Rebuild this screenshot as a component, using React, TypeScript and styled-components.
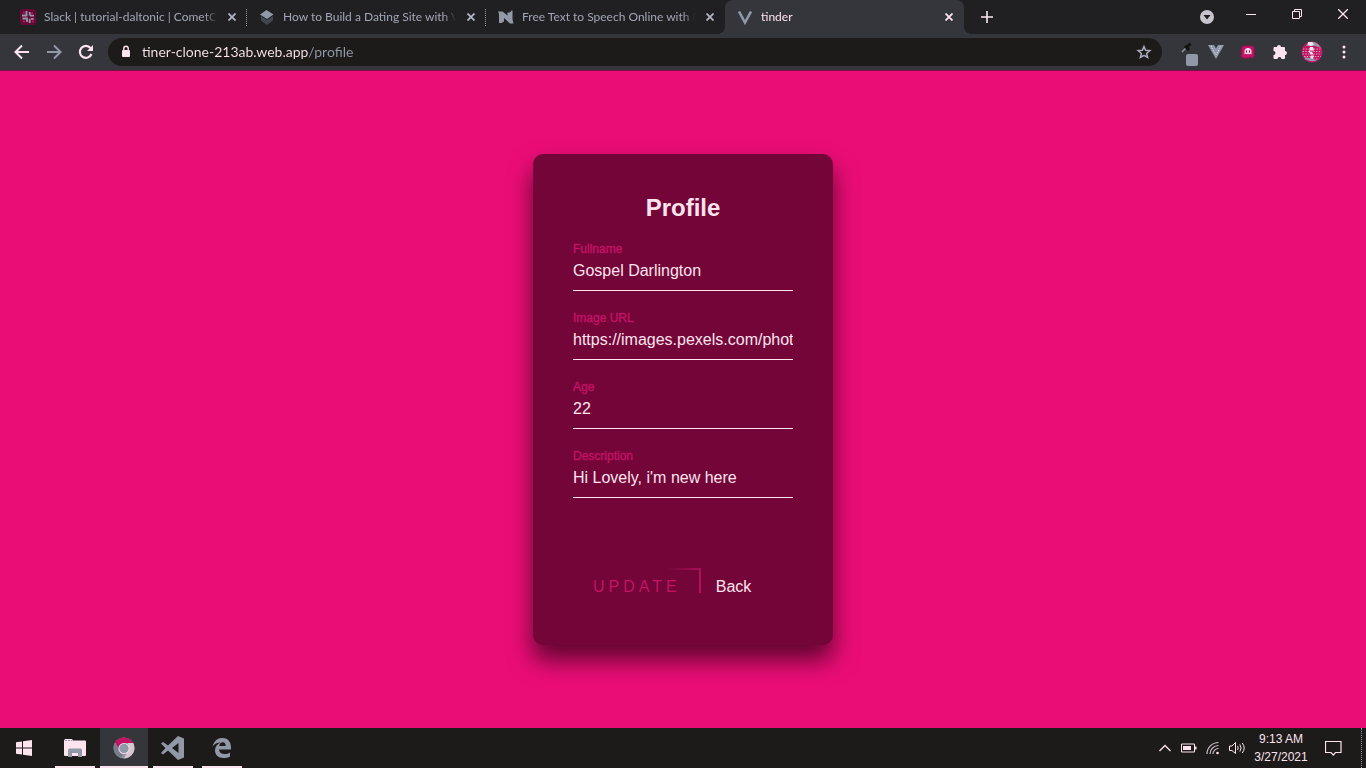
import React, { useState } from "react";
import styled, { createGlobalStyle, css } from "styled-components";

const c = {
  frame: "#202022",
  bar: "#35363b",
  dark: "#1c1b1a",
  grey: "#9198a8",
  light: "#fde4ee",
  pink: "#eb0d76",
  wine: "#730538",
  rose: "#c41265",
};

const GlobalStyle = createGlobalStyle`
  *, *::before, *::after { box-sizing: border-box; }
  body { margin: 0; background: ${c.pink}; }
  button, input { font: inherit; color: inherit; }
  svg { display: block; }
`;

const Screen = styled.div`
  min-height: 100vh;
  display: flex;
  flex-direction: column;
  font-family: Lato, "Open Sans", sans-serif;
  color: ${c.light};
`;

const PlainButton = styled.button`
  display: flex;
  align-items: center;
  justify-content: center;
  flex: none;
  padding: 0;
  border: 0;
  background: none;
`;

/* Tab strip */

const TabStrip = styled.header`
  display: flex;
  height: 34px;
  padding-left: 8px;
  background: ${c.frame};
`;

const Tabs = styled.nav`
  display: flex;
  flex: 0 1 956px;
  min-width: 0;
`;

const Tab = styled.div<{ $active?: boolean; $divider?: boolean }>`
  position: relative;
  display: flex;
  align-items: center;
  flex: 1 1 0;
  min-width: 0;
  gap: 8px;
  padding: 0 8px 0 12px;
  font-size: 12px;
  line-height: 16px;
  color: ${(p) => (p.$active ? c.light : "#a0a6b6")};
  ${(p) =>
    p.$divider &&
    css`
      &::after {
        content: "";
        position: absolute;
        right: 0;
        top: 9px;
        height: 17px;
        border-right: 1px dotted ${c.grey};
      }
    `}
  ${(p) =>
    p.$active &&
    css`
      background: ${c.bar};
      border-radius: 8px 8px 0 0;
      &::before,
      &::after {
        content: "";
        position: absolute;
        bottom: 0;
        width: 8px;
        height: 8px;
      }
      &::before {
        right: 100%;
        background: radial-gradient(circle at 0 0, transparent 8px, ${c.bar} 8px);
      }
      &::after {
        left: 100%;
        background: radial-gradient(circle at 100% 0, transparent 8px, ${c.bar} 8px);
      }
    `}
`;

const TabLink = styled.a`
  display: flex;
  align-items: center;
  flex: 1;
  gap: 8px;
  min-width: 0;
  color: inherit;
  text-decoration: none;
  svg { flex: none; }
`;

const TabTitle = styled.span`
  flex: 1;
  min-width: 0;
  overflow: hidden;
  white-space: nowrap;
  mask-image: linear-gradient(to right, #000 calc(100% - 12px), transparent);
`;

const TabClose = styled(PlainButton)`
  width: 14px;
  height: 14px;
`;

const NewTab = styled(PlainButton)`
  width: 28px;
  margin-left: 9px;
`;

const WindowControls = styled.div`
  display: flex;
  margin-left: auto;
`;

const WindowButton = styled(PlainButton)`
  width: 46px;
  height: 28px;
`;

const ProfileSwitch = styled(PlainButton)`
  width: 42px;
  height: 34px;
`;

/* Toolbar */

const Toolbar = styled.div`
  display: flex;
  align-items: center;
  height: 37px;
  padding: 0 6px;
  background: ${c.bar};
  border-bottom: 1px solid #7a1046;
`;

const ToolButton = styled(PlainButton)`
  width: 32px;
  height: 28px;
`;

const AddressBar = styled.label`
  display: flex;
  align-items: center;
  flex: 1;
  min-width: 0;
  height: 28px;
  margin: 0 6px;
  padding: 0 10px 0 12px;
  gap: 10px;
  border-radius: 14px;
  background: ${c.dark};
  svg { flex: none; }
`;

const AddressInput = styled.input`
  flex: 1;
  min-width: 0;
  height: 20px;
  padding: 0;
  border: 0;
  outline: 0;
  font-size: 14px;
  line-height: 20px;
  background: linear-gradient(to right, ${c.light} 167px, ${c.grey} 167px);
  background-clip: text;
  -webkit-text-fill-color: transparent;
`;

/* Page */

const Page = styled.main`
  flex: 1;
  display: flex;
  align-items: center;
  justify-content: center;
  background: ${c.pink};
  font-family: "Liberation Sans", Arial, sans-serif;
`;

const Card = styled.form`
  width: 300px;
  padding: 40px;
  border-radius: 10px;
  background: ${c.wine};
  box-shadow: 0 15px 25px rgba(0, 0, 0, 0.6);
`;

const Heading = styled.h1`
  margin: 0 0 19px;
  font-size: 24px;
  line-height: 28px;
  text-align: center;
`;

const Fields = styled.div`
  display: flex;
  flex-direction: column;
  gap: 19px;
`;

const Field = styled.label`
  display: flex;
  flex-direction: column;
`;

const FieldName = styled.span`
  font-size: 12px;
  line-height: 16px;
  color: ${c.rose};
  -webkit-text-stroke: 1px rgba(196, 18, 101, 0.4);
`;

const FieldInput = styled.input`
  width: 100%;
  height: 34px;
  padding: 0 0 6px;
  border: 0;
  border-bottom: 1px solid ${c.light};
  border-radius: 0;
  outline: 0;
  background: transparent;
  font-size: 16px;
`;

const Actions = styled.div`
  display: flex;
  align-items: center;
  gap: 15px;
  margin-top: 70px;
`;

const UpdateButton = styled.button`
  position: relative;
  height: 37px;
  padding: 0 20px;
  border: 0;
  background: none;
  color: ${c.rose};
  font-size: 16px;
  letter-spacing: 4px;
  text-transform: uppercase;
  &::before,
  &::after {
    content: "";
    position: absolute;
    top: 0;
    right: 0;
  }
  &::before {
    width: 34px;
    height: 2px;
    background: linear-gradient(to right, transparent, #a90f59);
  }
  &::after {
    width: 2px;
    height: 25px;
    background: linear-gradient(to bottom, #a90f59, #b81060);
  }
`;

const BackLink = styled.a`
  font-size: 16px;
  color: ${c.light};
  text-decoration: none;
`;

/* Taskbar */

const Taskbar = styled.footer`
  display: flex;
  height: 40px;
  background: ${c.dark};
`;

const StartButton = styled(PlainButton)`
  width: 48px;
`;

const Apps = styled.div`
  display: flex;
  margin-left: 3px;
  gap: 1px;
`;

const AppButton = styled(PlainButton)<{ $active?: boolean }>`
  position: relative;
  width: 48px;
  background: ${(p) => (p.$active ? c.bar : "none")};
  &::after {
    content: "";
    position: absolute;
    bottom: 0;
    left: ${(p) => (p.$active ? 0 : 4)}px;
    right: ${(p) => (p.$active ? 0 : 4)}px;
    height: 2px;
    background: ${c.light};
  }
`;

const Tray = styled.div`
  display: flex;
  align-items: center;
  margin-left: auto;
`;

const TrayButton = styled(PlainButton)<{ $wide?: boolean }>`
  width: ${(p) => (p.$wide ? 40 : 24)}px;
  height: 40px;
  margin-right: ${(p) => (p.$wide ? 8 : 0)}px;
`;

const Clock = styled(PlainButton)`
  flex-direction: column;
  width: 64px;
  font-family: "Liberation Sans", Arial, sans-serif;
  font-size: 12px;
  line-height: 18px;
`;

const ShowDesktop = styled(PlainButton)`
  width: 5px;
  height: 40px;
  border-left: 1px dotted ${c.grey};
`;

/* Icons */

const CloseIcon = ({ color = c.grey }: { color?: string }) => (
  <svg width="8" height="8" viewBox="0 0 8 8" stroke={color} strokeWidth="1.8">
    <path d="M.5.5l7 7M7.5.5l-7 7" />
  </svg>
);

const SlackIcon = () => (
  <svg width="16" height="16" viewBox="0 0 16 16">
    <rect width="16" height="16" rx="3" fill="#650a36" />
    <g fill="none" strokeWidth="1.8">
      <path d="M6.500 2v4.500H2M9.700 6.500V3M9.700 9.700v4.300M2.500 9.500H7V13M10 6.700h4" stroke={c.grey} />
      <path d="M3 3.500h2M12 3v2M3 12.500h2M11.500 9.700h3M12 12.500h2" stroke={c.rose} strokeWidth="1.400" />
      <path d="M11 10h2.500" stroke={c.grey} />
    </g>
  </svg>
);

const StackIcon = () => (
  <svg width="16" height="16" viewBox="0 0 16 16">
    <path d="M2 7l6 4 6-4v4.500L8 16l-6-4.500z" fill="#41454f" />
    <path d="M7.500 1L1 5.500 8 10l6.500-4.500z" fill={c.grey} />
  </svg>
);

const NaturalIcon = () => (
  <svg width="16" height="16" viewBox="0 0 16 16" fill={c.grey}>
    <path d="M0 2.500h4.500l5 4V3.500H12L13.500 1.500h1v9l1 4h-3.500L6 9v3.500L3.500 14H1V5z" />
  </svg>
);

const VIcon = () => (
  <svg width="16" height="16" viewBox="0 0 16 16" fill="none" stroke={c.grey} strokeWidth="2.600">
    <path d="M2 2.500l6 11 6-11" />
  </svg>
);

const tabs = [
  { title: "Slack | tutorial-daltonic | CometC", icon: <SlackIcon /> },
  { title: "How to Build a Dating Site with V", icon: <StackIcon /> },
  { title: "Free Text to Speech Online with N", icon: <NaturalIcon /> },
  { title: "tinder", icon: <VIcon /> },
];

const BackIcon = ({ color, flip }: { color: string; flip?: boolean }) => (
  <svg width="16" height="16" viewBox="0 0 16 16" fill="none" stroke={color} strokeWidth="2">
    <path d={flip ? "M1 8h13M8 1.500L14.500 8 8 14.500" : "M15 8H2M8 1.500L1.500 8 8 14.500"} />
  </svg>
);

const ReloadIcon = () => (
  <svg width="16" height="16" viewBox="0 0 16 16">
    <path d="M13.500 10A6 6 0 1 1 12.500 4" fill="none" stroke={c.light} strokeWidth="2.200" />
    <path d="M15 1v6H9z" fill={c.light} />
  </svg>
);

const LockIcon = () => (
  <svg width="12" height="14" viewBox="0 0 12 14">
    <rect x="2" y="5" width="8" height="7" rx="1" fill={c.light} />
    <path d="M3.800 5.500V3.500a2.200 2.200 0 0 1 4.400 0v2" fill="none" stroke={c.light} strokeWidth="1.400" />
  </svg>
);

const StarIcon = () => (
  <svg width="16" height="16" viewBox="0 0 16 16" fill="none" stroke="#a9adba" strokeWidth="1.500">
    <path d="M8 2.500l1.600 3.800 4.200.300-3.200 2.800 1 4.100L8 11.300l-3.600 2.200 1-4.100-3.200-2.800 4.200-.300z" />
  </svg>
);

const DropperIcon = () => (
  <svg width="32" height="28" viewBox="0 0 32 28">
    <path d="M14 14l6-6" stroke={c.grey} strokeWidth="1.500" />
    <path d="M17 8l4 4M18.500 9.500l4-4" stroke="#121212" strokeWidth="3" />
    <rect x="18" y="16" width="12" height="12" rx="2" fill={c.grey} />
  </svg>
);

const VueIcon = () => (
  <svg width="16" height="16" viewBox="0 0 16 16">
    <path d="M0 1h16L8 15z" fill={c.grey} />
    <path d="M3 2l5 9 5-9" fill="none" stroke={c.light} strokeWidth="1" strokeDasharray="1 1.500" />
    <path d="M6 1h4L8 4.500z" fill={c.bar} />
  </svg>
);

const GhostIcon = () => (
  <svg width="14" height="14" viewBox="0 0 14 14">
    <path d="M1 2l2-1h8l2 1v9l-1 2-2-1-2 1h-2l-2 .500-2-1-2-1z" fill={c.rose} stroke="#a00a50" />
    <path d="M3.500 9.500V6.500a3.500 3.500 0 0 1 7 0v3l-1.200-1L8 9.500 7 8.500l-1 1-1.300-1z" fill={c.light} />
    <path d="M5.500 5.500v2M8.500 5.500v2" stroke={c.wine} strokeWidth="1.200" />
  </svg>
);

const PuzzleIcon = () => (
  <svg width="16" height="16" viewBox="0 0 16 16" fill={c.light}>
    <path d="M1.500 4a1 1 0 0 1 1-1H5a2 2 0 0 1 4 0h3a1 1 0 0 1 1 1v3a2 2 0 0 1 0 4v3a1 1 0 0 1-1 1H9.500a2 2 0 0 0-4 0h-3a1 1 0 0 1-1-1v-3a2 2 0 0 0 0-4z" />
  </svg>
);

const AvatarIcon = () => (
  <svg width="22" height="22" viewBox="0 0 22 22">
    <circle cx="11" cy="11" r="10.500" fill={c.rose} />
    <path d="M7 1.500q6-2 10 1.500l3 4-6-2-9 0z" fill={c.grey} />
    <path d="M7 1h4l2 2.500-3 1.500-3-1z" fill={c.light} />
    <g stroke="#c9a3b8" strokeWidth="1.200" strokeDasharray="1.500 1.200" fill="none">
      <path d="M2 8h18M1.500 10.500h19M1.500 13h19M3 15.500h17M4 18h14" />
    </g>
    <path d="M9 6h3l1 3-2 2 2 3-1 4h-3l1-4-2-3z" fill={c.light} />
    <path d="M3 16q5 6 13 3.500l-5-2z" fill={c.grey} />
    <path d="M9 10h3M10 14h3" stroke={c.rose} />
  </svg>
);

const MenuIcon = () => (
  <svg width="4" height="14" viewBox="0 0 4 14" fill={c.light}>
    <circle cx="2" cy="2" r="1.500" />
    <circle cx="2" cy="7" r="1.500" />
    <circle cx="2" cy="12" r="1.500" />
  </svg>
);

const WindowsIcon = () => (
  <svg width="16" height="16" viewBox="0 0 16 16" fill={c.light}>
    <path d="M0 2.200L6 1.400v6.100H0zM7 1.300L16 0v7.500H7zM0 8.500h6v6.100l-6-.800zM7 8.500h9V16l-9-1.300z" />
  </svg>
);

const FolderIcon = () => (
  <svg width="22" height="18" viewBox="0 0 22 18">
    <path d="M0 1.500L1 0h7l1 1.500h12q1 0 1 1V16q0 1-1 1H1q-1 0-1-1z" fill={c.light} />
    <path d="M1 1.500h7" stroke={c.grey} strokeDasharray="2 1" />
    <path d="M4 18v-7q0-1.500 1.500-1.500h11q1.500 0 1.500 1.500v7h-4v-4H8v4z" fill={c.grey} />
  </svg>
);

const ChromeIcon = () => (
  <svg width="22" height="22" viewBox="0 0 22 22">
    <circle cx="11" cy="11" r="10.500" fill="#8f95a2" />
    <path d="M2 5.500A10.500 10.500 0 0 1 20.200 6H11L6.500 13z" fill={c.rose} />
    <path d="M20.200 6A10.500 10.500 0 0 1 11 21.500L15.500 13 15 6z" fill="#d9c6d1" />
    <path d="M2 5.500L6.500 13 10 16l-1.500 5A10.500 10.500 0 0 1 2 5.500z" fill="#777d89" />
    <circle cx="11" cy="11.500" r="5.500" fill={c.light} />
    <circle cx="11" cy="11.500" r="4.700" fill={c.grey} />
  </svg>
);

const CodeIcon = () => (
  <svg width="24" height="24" viewBox="0 0 24 24">
    <path d="M17 0l6 2.500v19L17 24 7 14.500l-5 4-2-1.500 4.500-5L0 7.500 2 6l5 3.500zM17.500 7L11 12l6.500 5z" fill={c.grey} fillRule="evenodd" />
  </svg>
);

const EdgeIcon = () => (
  <svg width="22" height="22" viewBox="0 0 22 22">
    <path d="M1.500 9.500C3 3.500 7 1 11.500 1c6 0 9 4.500 8.500 11.500H8c.300 3 2.500 4.500 5.500 4.500 2 0 4-.500 5.500-1.500v4C17.200 20.500 15 21 12.500 21 7 21 4 17.500 4 13.500c0-3.500 2-6.500 5.500-8-3.500 0-6 1.200-8 4zM8.200 9h6.500c0-2.300-1-3.700-3-3.700-1.800 0-3 1.300-3.500 3.700z" fill={c.grey} fillRule="evenodd" />
  </svg>
);

const ChevronIcon = () => (
  <svg width="12" height="8" viewBox="0 0 12 8" fill="none" stroke={c.light} strokeWidth="1.300">
    <path d="M.500 7L6 1.500 11.500 7" />
  </svg>
);

const BatteryIcon = () => (
  <svg width="16" height="10" viewBox="0 0 16 10">
    <path d="M.500 1h13v8H.500z" fill="none" stroke={c.light} />
    <path d="M2 3h8v4H2zM14 3.500h1.500v3H14z" fill={c.light} />
  </svg>
);

const WifiIcon = () => (
  <svg width="14" height="14" viewBox="0 0 14 14" fill="none" stroke="#c8bdc8" strokeWidth="1.200">
    <path d="M1 13A11.500 11.500 0 0 1 12.500 1.500M4 13a8.500 8.500 0 0 1 8.500-8.500M7 13a5.500 5.500 0 0 1 5.500-5.500" />
    <circle cx="11.500" cy="12" r="1.300" fill={c.light} stroke="none" />
  </svg>
);

const SoundIcon = () => (
  <svg width="17" height="14" viewBox="0 0 17 14" fill="none" stroke={c.light}>
    <path d="M.500 5v4.500H3L6.500 12.500v-11L3 5z" />
    <path d="M8.500 5q1.500 2 0 4M10.800 3.500q2.700 3.500 0 7M13.200 2q4 5 0 10" />
  </svg>
);

const NoteIcon = () => (
  <svg width="17" height="17" viewBox="0 0 17 17" fill="none" stroke={c.light} strokeWidth="1.200">
    <path d="M.500 1.500h15.500v11h-5.500L8.300 15 6 12.500H.500z" />
  </svg>
);

const App: React.FC = () => {
  const [url, setUrl] = useState("tiner-clone-213ab.web.app/profile");
  const fields = [
    { id: "fullname", label: "Fullname", value: "Gospel Darlington" },
    { id: "image", label: "Image URL", value: "https://images.pexels.com/photos" },
    { id: "age", label: "Age", value: "22" },
    { id: "description", label: "Description", value: "Hi Lovely, i'm new here" },
  ];

  return (
    <Screen>
      <GlobalStyle />
      <TabStrip>
        <Tabs>
          {tabs.map((t, i) => (
            <Tab key={t.title} $active={i === 3} $divider={i < 2}>
              <TabLink href="#">
                {t.icon}
                <TabTitle>{t.title}</TabTitle>
              </TabLink>
              <TabClose type="button" aria-label="Close tab">
                <CloseIcon color={i === 3 ? c.light : "#b3b7c4"} />
              </TabClose>
            </Tab>
          ))}
        </Tabs>
        <NewTab type="button" aria-label="New tab">
          <svg width="12" height="12" viewBox="0 0 12 12" stroke={c.light} strokeWidth="1.600">
            <path d="M6 0v12M0 6h12" />
          </svg>
        </NewTab>
        <WindowControls>
          <ProfileSwitch type="button" aria-label="Search tabs">
            <svg width="14" height="14" viewBox="0 0 14 14">
              <circle cx="7" cy="7" r="7" fill="#c9c3ce" />
              <path d="M3.500 5h7L7 9.500z" fill={c.dark} />
            </svg>
          </ProfileSwitch>
          <WindowButton type="button" aria-label="Minimize">
            <svg width="10" height="10" viewBox="0 0 10 10" stroke={c.light}>
              <path d="M0 5.500h10" />
            </svg>
          </WindowButton>
          <WindowButton type="button" aria-label="Restore">
            <svg width="10" height="10" viewBox="0 0 10 10" fill="none" stroke={c.light}>
              <path d="M.500 2.500h7v7h-7zM2.500 2.500v-2h7v7h-2" />
            </svg>
          </WindowButton>
          <WindowButton type="button" aria-label="Close">
            <svg width="10" height="10" viewBox="0 0 10 10" stroke={c.light} strokeWidth="1.300">
              <path d="M0 0l10 10M10 0L0 10" />
            </svg>
          </WindowButton>
        </WindowControls>
      </TabStrip>

      <Toolbar>
        <ToolButton type="button" aria-label="Back"><BackIcon color={c.light} /></ToolButton>
        <ToolButton type="button" aria-label="Forward"><BackIcon color={c.grey} flip /></ToolButton>
        <ToolButton type="button" aria-label="Reload"><ReloadIcon /></ToolButton>
        <AddressBar>
          <LockIcon />
          <AddressInput
            aria-label="Address"
            spellCheck={false}
            value={url}
            onChange={(e) => setUrl(e.target.value)}
          />
          <StarIcon />
        </AddressBar>
        <ToolButton type="button" aria-label="Colour picker"><DropperIcon /></ToolButton>
        <ToolButton type="button" aria-label="Vue devtools"><VueIcon /></ToolButton>
        <ToolButton type="button" aria-label="Extension"><GhostIcon /></ToolButton>
        <ToolButton type="button" aria-label="Extensions"><PuzzleIcon /></ToolButton>
        <ToolButton type="button" aria-label="Account"><AvatarIcon /></ToolButton>
        <ToolButton type="button" aria-label="Menu"><MenuIcon /></ToolButton>
      </Toolbar>

      <Page>
        <Card onSubmit={(e) => e.preventDefault()}>
          <Heading>Profile</Heading>
          <Fields>
            {fields.map((f) => (
              <Field key={f.id} htmlFor={f.id}>
                <FieldName>{f.label}</FieldName>
                <FieldInput id={f.id} name={f.id} defaultValue={f.value} spellCheck={false} />
              </Field>
            ))}
          </Fields>
          <Actions>
            <UpdateButton type="submit">Update</UpdateButton>
            <BackLink href="#">Back</BackLink>
          </Actions>
        </Card>
      </Page>

      <Taskbar>
        <StartButton type="button" aria-label="Start"><WindowsIcon /></StartButton>
        <Apps>
          <AppButton type="button" aria-label="File Explorer"><FolderIcon /></AppButton>
          <AppButton type="button" aria-label="Chrome" $active><ChromeIcon /></AppButton>
          <AppButton type="button" aria-label="Code"><CodeIcon /></AppButton>
          <AppButton type="button" aria-label="Edge"><EdgeIcon /></AppButton>
        </Apps>
        <Tray>
          <TrayButton type="button" aria-label="Show hidden icons"><ChevronIcon /></TrayButton>
          <TrayButton type="button" aria-label="Battery"><BatteryIcon /></TrayButton>
          <TrayButton type="button" aria-label="Network"><WifiIcon /></TrayButton>
          <TrayButton type="button" aria-label="Volume"><SoundIcon /></TrayButton>
          <Clock type="button">
            <span>9:13 AM</span>
            <span>3/27/2021</span>
          </Clock>
          <TrayButton type="button" aria-label="Notifications" $wide><NoteIcon /></TrayButton>
          <ShowDesktop type="button" aria-label="Show desktop" />
        </Tray>
      </Taskbar>
    </Screen>
  );
};

export default App;
